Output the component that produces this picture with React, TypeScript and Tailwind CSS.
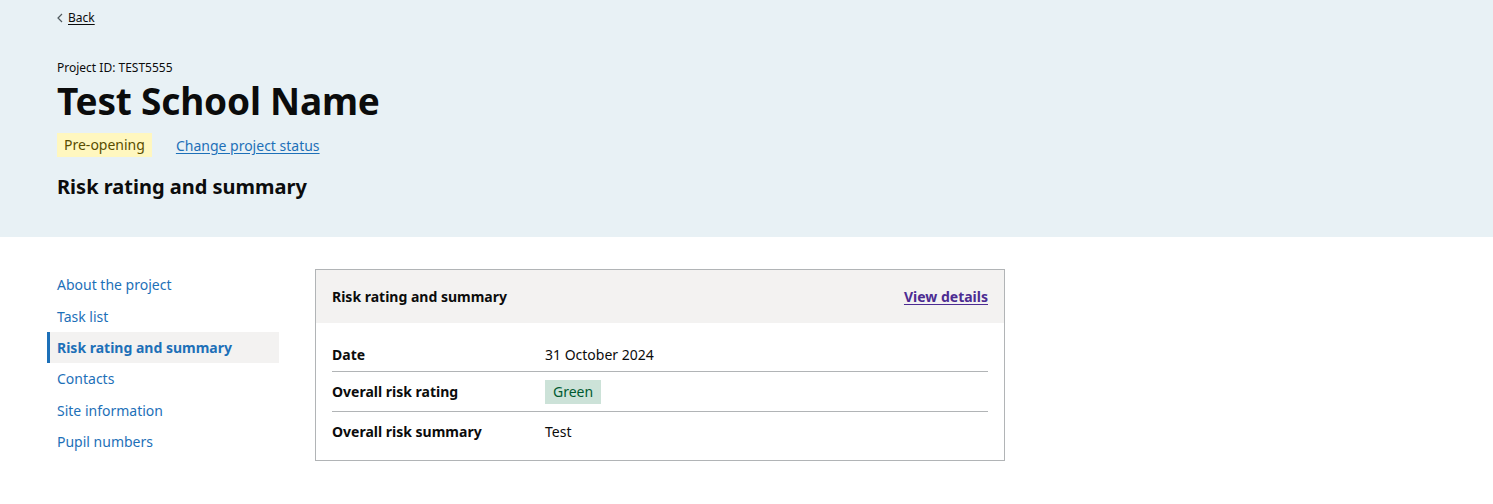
import React from "react";

export default function App() {
  const nav = [
    "About the project",
    "Task list",
    "Risk rating and summary",
    "Contacts",
    "Site information",
    "Pupil numbers",
  ];
  return (
    <div className="min-h-[504px] bg-white text-[#0b0c0c] font-['Noto_Sans',sans-serif]">
      <div className="bg-[#e8f1f5] h-[237px] px-[57px] pt-[8px]">
        <a href="#" className="flex items-center gap-[4px] text-[12px] leading-[20px] text-[#0b0c0c]">
          <svg width="8" height="10" viewBox="0 0 8 10" className="-ml-[1px]">
            <path d="M6 1 L2 5 L6 9" fill="none" stroke="#505a5f" strokeWidth="1.2" />
          </svg>
          <span className="underline underline-offset-2">Back</span>
        </a>
        <div className="mt-[31px] text-[12px] leading-[18px]">Project ID: TEST5555</div>
        <h1 className="text-[37px] leading-[48px] font-bold tracking-[-0.2px]">Test School Name</h1>
        <div className="mt-[8px] flex items-center gap-[24px]">
          <span className="bg-[#fff7bf] text-[#594d00] text-[14px] leading-[24px] px-[7px]">Pre-opening</span>
          <a href="#" className="text-[#1d70b8] text-[14px] underline underline-offset-2">Change project status</a>
        </div>
        <h2 className="mt-[15px] text-[20px] leading-[30px] font-bold">Risk rating and summary</h2>
      </div>
      <div className="flex pt-[32px] pl-[47px]">
        <nav className="w-[232px] flex flex-col">
          {nav.map((n) => {
            const active = n === "Risk rating and summary";
            return active ? (
              <a key={n} href="#" className="h-[31px] flex items-center border-l-[3px] border-[#1d70b8] bg-[#f3f2f1] pl-[7px] text-[14px] font-bold text-[#1d70b8]">
                {n}
              </a>
            ) : (
              <a key={n} href="#" className="h-[31.5px] flex items-center pl-[10px] text-[14px] text-[#1d70b8]">
                {n}
              </a>
            );
          })}
        </nav>
        <div className="ml-[36px] w-[690px] h-[192px] border border-[#b1b4b6]">
          <div className="bg-[#f3f2f1] h-[53px] flex items-center justify-between px-[16px]">
            <span className="text-[14px] font-bold">Risk rating and summary</span>
            <a href="#" className="text-[14px] font-bold text-[#4c2c92] underline underline-offset-2">View details</a>
          </div>
          <div className="px-[16px] pt-[15px] text-[14px]">
            <div className="flex h-[34px] items-center border-b border-[#b1b4b6]">
              <div className="w-[213px] font-bold">Date</div>
              <div>31 October 2024</div>
            </div>
            <div className="flex h-[40px] items-center border-b border-[#b1b4b6]">
              <div className="w-[213px] font-bold">Overall risk rating</div>
              <div className="bg-[#cce2d8] text-[#005a30] px-[8px] leading-[24px] text-[14px]">Green</div>
            </div>
            <div className="flex h-[38px] items-center">
              <div className="w-[213px] font-bold">Overall risk summary</div>
              <div>Test</div>
            </div>
          </div>
        </div>
      </div>
    </div>
  );
}
